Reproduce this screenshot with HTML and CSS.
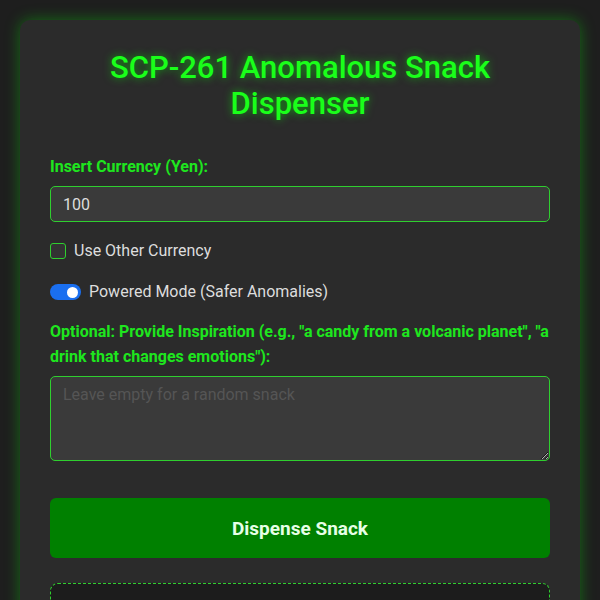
FILE: index.html
```html
<!DOCTYPE html>
<html lang="en">
<head>
  <meta charset="UTF-8">
  <title>SCP-261 Anomalous Snack Dispenser</title>
  <link rel="stylesheet" href="styles.css">
</head>
<body>
  <div class="machine">
    <h1>SCP-261 Anomalous Snack Dispenser</h1>

    <label class="field-label" for="currency">Insert Currency (Yen):</label>
    <input type="text" id="currency" class="text-input" value="100">

    <label class="check-row">
      <span class="checkbox"></span>
      Use Other Currency
    </label>

    <label class="check-row toggle-row">
      <span class="toggle"><span class="knob"></span></span>
      Powered Mode (Safer Anomalies)
    </label>

    <label class="field-label" for="inspiration">Optional: Provide Inspiration (e.g., "a candy from a volcanic planet", "a drink that changes emotions"):</label>
    <textarea id="inspiration" class="text-area" placeholder="Leave empty for a random snack"></textarea>

    <button class="dispense">Dispense Snack</button>

    <div class="output"></div>
  </div>
</body>
</html>
```

FILE: styles.css
```css
* {margin: 0; padding: 0; box-sizing: border-box;}
body {background-color: #1e1e1e; font-family: Roboto, 'Liberation Sans', sans-serif; color: #ddd; padding: 20px; overflow: hidden;}
.machine {background-color: #2b2b2b; border-radius: 10px; padding: 30px; box-shadow: 0 0 15px rgba(0,255,0,0.35); display: flex; flex-direction: column;}
h1 {color: #1aff1a; font-size: 31px; font-weight: 500; line-height: 36px; text-align: center; text-shadow: 0 0 8px rgba(0,255,0,0.6); margin-bottom: 32px; padding: 0 40px;}
.field-label {color: #1ee61e; font-weight: bold; font-size: 16px; line-height: 25px; margin-bottom: 7px;}
.text-input {background-color: #3a3a3a; border: 1px solid #2fcf2f; border-radius: 5px; color: #ddd; font-family: inherit; font-size: 16px; padding: 8px 12px; height: 36px; margin-bottom: 19px;}
.text-area {background-color: #3a3a3a; border: 1px solid #2fcf2f; border-radius: 5px; color: #ddd; font-family: inherit; font-size: 16px; padding: 8px 12px; height: 85px; margin-bottom: 37px; resize: vertical;}
.text-area::placeholder {color: #555;}
.check-row {display: flex; align-items: center; gap: 8px; font-size: 16px; line-height: 20px; color: #ddd; margin-bottom: 21px;}
.toggle-row {margin-bottom: 17px;}
.checkbox {width: 16px; height: 16px; border: 1px solid #2fcf2f; border-radius: 3px; background-color: #333;}
.toggle {width: 31px; height: 16px; border-radius: 8px; background-color: #1a6ff0; display: flex; align-items: center; justify-content: flex-end; padding: 0 3px;}
.knob {width: 11px; height: 11px; border-radius: 50%; background-color: #fff;}
.dispense {background-color: #008000; color: #e6ffe6; border: none; border-radius: 6px; height: 60px; font-family: inherit; font-size: 19px; font-weight: bold; margin-bottom: 25px;}
.output {background-color: #1c1c1c; border: 1px dashed #2fcf2f; border-radius: 8px; height: 80px;}
```
